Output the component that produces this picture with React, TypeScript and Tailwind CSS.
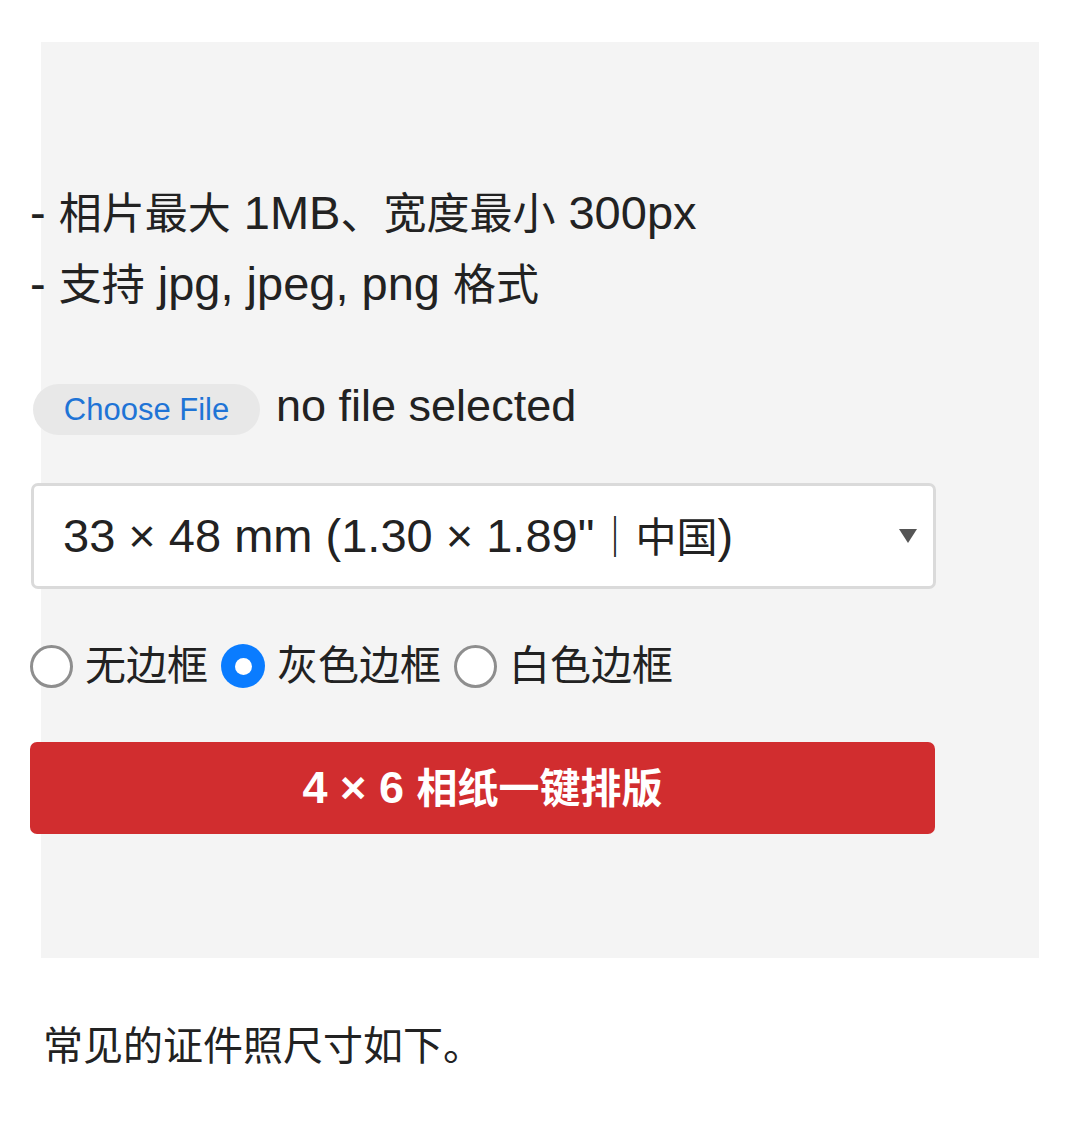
import React from "react";

const font = { fontFamily: '"Liberation Sans", "Noto Sans CJK SC", sans-serif' };

function L({ children, size = "text-[46px]" }: { children: React.ReactNode; size?: string }) {
  return <span className={size}>{children}</span>;
}

function Radio({ checked, label }: { checked?: boolean; label: string }) {
  return (
    <div className="flex items-center">
      {checked ? (
        <span className="w-[44px] h-[44px] rounded-full bg-[#0a7cff] flex items-center justify-center">
          <span className="w-[17px] h-[17px] rounded-full bg-white" />
        </span>
      ) : (
        <span className="w-[43px] h-[43px] rounded-full border-[3px] border-[#8e8e8e] bg-white" />
      )}
      <span className="ml-[12px] mr-[13px] text-[41px] leading-[50px] text-[#222]">{label}</span>
    </div>
  );
}

export default function App() {
  return (
    <div className="w-[1080px] h-[1132px] bg-white overflow-hidden" style={font}>
      <div className="ml-[41px] mt-[42px] w-[998px] h-[916px] bg-[#f4f4f4] pt-[136px]">
        <div className="ml-[-11px] w-[906px]">
          <div className="text-[43px] leading-[70px] text-[#222] whitespace-nowrap">
            <div>
              <L size="text-[47px]">- </L>相片最大<L size="text-[47px]"> 1MB</L>、宽度最小<L size="text-[47px]"> 300px</L>
            </div>
            <div>
              <L size="text-[47px]">- </L>支持<L size="text-[47px]"> jpg, jpeg, png </L>格式
            </div>
          </div>
          <div className="mt-[64px] flex items-center h-[51px]">
            <button className="ml-[3px] h-[51px] w-[227px] rounded-full bg-[#e8e8e8] text-[#1f74d6] text-[31px] leading-none">
              Choose File
            </button>
            <span className="ml-[16px] text-[45px] leading-[51px] text-[#222] -mt-[8px]">no file selected</span>
          </div>
          <div className="mt-[48px] ml-[1px] h-[106px] w-[905px] rounded-[7px] border-[3px] border-[#dadada] bg-white flex items-center pl-[29px] pr-[16px]">
            <span className="flex-1 text-[41px] text-[#222] whitespace-nowrap">
              <L size="text-[47px]">33 × 48 mm (1.30 × 1.89"</L>｜中国<L size="text-[47px]">)</L>
            </span>
            <svg width="18" height="14" viewBox="0 0 18 14">
              <path d="M0 0 L18 0 L9 14 Z" fill="#555" />
            </svg>
          </div>
          <div className="mt-[52px] flex items-center">
            <Radio label="无边框" />
            <Radio checked label="灰色边框" />
            <Radio label="白色边框" />
          </div>
          <button className="mt-[51px] w-[905px] h-[92px] rounded-[7px] bg-[#d12d2f] text-white font-bold flex items-center justify-center">
            <span className="text-[41px] whitespace-pre">
              <L size="text-[45px]">4 × 6 </L>相纸一键排版
            </span>
          </button>
        </div>
      </div>
      <div className="ml-[43px] mt-[63px] text-[40px] leading-[50px] text-[#222]">常见的证件照尺寸如下。</div>
    </div>
  );
}
